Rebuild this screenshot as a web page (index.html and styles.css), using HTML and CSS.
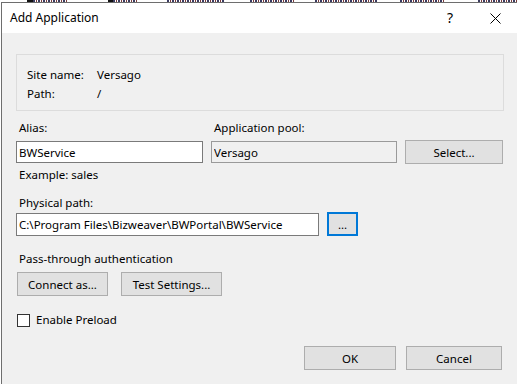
FILE: index.html
```html
<!DOCTYPE html>
<html lang="en">
<head>
  <meta charset="UTF-8" />
  <title>Add Application</title>
  <link rel="stylesheet" href="styles.css">
</head>
<body>
  <!-- bottom edge of the window behind the dialog -->
  <div class="behind">
    <i style="margin-left: 27px; width: 6px;" class="dark"></i><i style="width: 34px;"></i>
    <i style="margin-left: 41px; width: 5px;" class="dark"></i><i style="width: 24px;"></i>
    <i style="margin-left: 30px; width: 58px;"></i>
    <i style="margin-left: 25px; width: 45px;"></i>
    <i style="margin-left: 20px; width: 63px;"></i>
    <i style="margin-left: 22px; width: 45px;"></i>
    <i style="margin-left: 33px; width: 39px;"></i>
  </div>
  <div class="dialog">
    <div class="titlebar">
      <span class="title">Add Application</span>
      <span class="help">?</span>
      <svg class="close" width="11" height="11" viewBox="0 0 11 11">
        <path d="M0.5 0.5 L10.5 10.5 M10.5 0.5 L0.5 10.5" stroke="#000" stroke-width="1" fill="none" />
      </svg>
    </div>
    <div class="content">
      <div class="info">
        <div class="info-row"><span class="info-label">Site name:</span><span>Versago</span></div>
        <div class="info-row"><span class="info-label">Path:</span><span>/</span></div>
      </div>

      <div class="row labels">
        <label class="alias-col">Alias:</label>
        <label>Application pool:</label>
      </div>
      <div class="row inputs">
        <input class="text alias" type="text" value="BWService" />
        <input class="text pool" type="text" value="Versago" readonly />
        <button class="btn select">Select...</button>
      </div>
      <div class="hint">Example: sales</div>

      <label class="path-label">Physical path:</label>
      <div class="row inputs path-row">
        <input class="text path" type="text" value="C:\Program Files\Bizweaver\BWPortal\BWService" />
        <button class="btn browse">...</button>
      </div>

      <div class="section">Pass-through authentication</div>
      <div class="row auth">
        <button class="btn connect">Connect as...</button>
        <button class="btn test">Test Settings...</button>
      </div>

      <label class="check"><span class="box"></span>Enable Preload</label>

      <div class="footer">
        <button class="btn ok">OK</button>
        <button class="btn cancel">Cancel</button>
      </div>
    </div>
  </div>
</body>
</html>
```
FILE: styles.css
```css
* {
  box-sizing: border-box;
}
body {
  margin: 0;
  width: 517px;
  height: 384px;
  overflow: hidden;
  background: #fff;
  font-family: "Noto Sans", "Open Sans", sans-serif;
  font-size: 11.5px;
  line-height: 16px;
  color: #000;
}
.behind {
  height: 2px;
  display: flex;
}
.behind i {
  display: block;
  height: 2px;
  background: repeating-linear-gradient(90deg, #3a3a60 0 2px, #fff 2px 3px, #7a3a3a 3px 4px, #fff 4px 5px);
}
.behind i.dark {
  background: #111;
}
.dialog {
  margin-left: 1px;
  border-left: 1px solid #6e6e6e;
  border-top: 1px solid #6e6e6e;
  height: 382px;
  background: #f0f0f0;
}
.titlebar {
  height: 30px;
  background: #fff;
  display: flex;
  align-items: center;
  padding-left: 8px;
}
.title {
  flex: 1;
  font-size: 12px;
}
.help {
  font-size: 14px;
  margin-right: 37px;
}
.close {
  margin-right: 16px;
}
.content {
  padding: 21px 13px 0 14px;
}
.info {
  border: 1px solid #dcdcdc;
  height: 57px;
  width: 488px;
  padding: 10px 0 0 10px;
}
.info-row {
  display: flex;
  height: 19px;
  line-height: 19px;
}
.info-label {
  width: 70px;
}
.row {
  display: flex;
}
.labels {
  margin-top: 9px;
  height: 16px;
  padding-left: 3px;
}
.alias-col {
  width: 195px;
}
.inputs {
  align-items: center;
  height: 24px;
  margin-top: 4px;
}
.text {
  font-family: inherit;
  font-size: 11.5px;
  height: 22px;
  border: 1px solid #7a7a7a;
  background: #fff;
  padding: 0 2px;
  outline: none;
}
.alias {
  width: 187px;
}
.pool {
  width: 186px;
  margin-left: 8px;
  background: #f0f0f0;
  border-color: #9a9a9a;
}
.btn {
  font-family: inherit;
  font-size: 11.5px;
  height: 24px;
  background: #e1e1e1;
  border: 1px solid #adadad;
  color: #000;
  padding: 0;
}
.select {
  width: 98px;
  margin-left: 8px;
}
.hint {
  margin-top: 3px;
  padding-left: 3px;
  height: 16px;
}
.path-label {
  display: block;
  margin-top: 12px;
  padding-left: 3px;
  height: 16px;
}
.path-row {
  margin-top: 1px;
}
.path {
  width: 303px;
  height: 23px;
}
.browse {
  width: 31px;
  margin-left: 8px;
  border: 2px solid #0078d7;
}
.section {
  margin-top: 15px;
  padding-left: 3px;
  height: 16px;
}
.auth {
  margin-top: 5px;
  padding-left: 1px;
}
.connect {
  width: 91px;
}
.test {
  width: 101px;
  margin-left: 13px;
}
.check {
  display: flex;
  align-items: center;
  margin-top: 16px;
  height: 16px;
}
.box {
  width: 13px;
  height: 13px;
  border: 1px solid #333;
  background: #fff;
  margin-left: 1px;
  margin-right: 6px;
}
.footer {
  display: flex;
  justify-content: flex-end;
  margin-top: 18px;
  width: 486px;
}
.ok {
  width: 92px;
}
.cancel {
  width: 96px;
  margin-left: 10px;
}
```
